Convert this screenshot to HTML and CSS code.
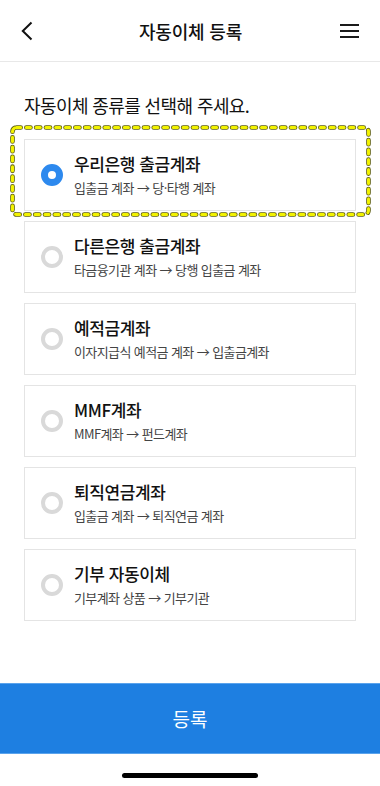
FILE: index.html
```html
<!DOCTYPE html>
<html lang="ko">
<head>
<meta charset="utf-8">
<title>자동이체 등록</title>
<link rel="stylesheet" href="styles.css">
</head>
<body>
<div class="app">
  <header class="topbar">
    <button class="icon-btn back" aria-label="뒤로">
      <svg width="12" height="20" viewBox="0 0 12 20"><polyline points="10.5,1.5 1.8,10 10.5,18.5" fill="none" stroke="#111" stroke-width="2" stroke-linejoin="miter"/></svg>
    </button>
    <h1 class="title">자동이체 등록</h1>
    <button class="icon-btn menu" aria-label="메뉴">
      <span class="bar"></span><span class="bar"></span><span class="bar"></span>
    </button>
  </header>

  <main class="content">
    <h2 class="lead">자동이체 종류를 선택해 주세요.</h2>
    <ul class="options">
      <li class="card selected">
        <svg class="highlight" width="361" height="92" viewBox="0 0 361 92" aria-hidden="true">
          <rect x="2.5" y="2.5" width="356" height="87" rx="4" fill="none" stroke="#5e5e12" stroke-width="4.6" stroke-dasharray="4.2 5.6" stroke-linecap="round"/>
          <rect x="2.5" y="2.5" width="356" height="87" rx="4" fill="none" stroke="#f2f200" stroke-width="3" stroke-dasharray="4.2 5.6" stroke-linecap="round"/>
        </svg>
        <span class="radio on"></span>
        <div class="texts">
          <div class="name">우리은행 출금계좌</div>
          <div class="desc">입출금 계좌 → 당·타행 계좌</div>
        </div>
      </li>
      <li class="card">
        <span class="radio"></span>
        <div class="texts">
          <div class="name">다른은행 출금계좌</div>
          <div class="desc">타금융기관 계좌 → 당행 입출금 계좌</div>
        </div>
      </li>
      <li class="card">
        <span class="radio"></span>
        <div class="texts">
          <div class="name">예적금계좌</div>
          <div class="desc">이자지급식 예적금 계좌 → 입출금계좌</div>
        </div>
      </li>
      <li class="card">
        <span class="radio"></span>
        <div class="texts">
          <div class="name">MMF계좌</div>
          <div class="desc">MMF계좌 → 펀드계좌</div>
        </div>
      </li>
      <li class="card">
        <span class="radio"></span>
        <div class="texts">
          <div class="name">퇴직연금계좌</div>
          <div class="desc">입출금 계좌 → 퇴직연금 계좌</div>
        </div>
      </li>
      <li class="card">
        <span class="radio"></span>
        <div class="texts">
          <div class="name">기부 자동이체</div>
          <div class="desc">기부계좌 상품 → 기부기관</div>
        </div>
      </li>
    </ul>
  </main>

  <footer class="footer">
    <button class="submit">등록</button>
    <div class="home-area"><span class="home-indicator"></span></div>
  </footer>
</div>
</body>
</html>
```

FILE: styles.css
```css
* { box-sizing: border-box; }
html, body { margin: 0; padding: 0; background: #fff; }
body {
  font-family: "Noto Sans CJK KR", "Noto Sans", sans-serif;
  color: #111;
}
.app {
  width: 380px;
  height: 786px;
  display: flex;
  flex-direction: column;
  overflow: hidden;
}
.topbar {
  height: 62px;
  flex: none;
  display: flex;
  align-items: center;
  justify-content: space-between;
  padding: 0 21px 0 21px;
  border-bottom: 1px solid #e8e8e8;
}
.icon-btn {
  border: 0;
  background: none;
  padding: 0;
  width: 20px;
  height: 24px;
  display: flex;
  align-items: center;
  cursor: pointer;
}
.back { justify-content: flex-start; margin-top: 1px; }
.menu {
  flex-direction: column;
  justify-content: center;
  gap: 4px;
  width: 19px;
  margin-right: 0;
}
.menu .bar {
  display: block;
  width: 19px;
  height: 2px;
  background: #1a1a1a;
}
.title {
  margin: 0;
  font-size: 18px;
  font-weight: 500;
  letter-spacing: -0.2px;
  color: #111;
}
.content {
  flex: 1;
  padding: 0 24px;
}
.lead {
  margin: 30px 0 0 0;
  font-size: 18px;
  line-height: 26px;
  font-weight: 400;
  letter-spacing: -0.6px;
  color: #111;
}
.options {
  list-style: none;
  margin: 21px 0 0 0;
  padding: 0;
  display: flex;
  flex-direction: column;
  gap: 10px;
}
.card {
  position: relative;
  height: 72px;
  border: 1px solid #e4e4e4;
  display: flex;
  align-items: center;
  padding: 0 0 0 16px;
  gap: 11px;
}
.highlight {
  position: absolute;
  left: -15.5px;
  top: -15px;
  pointer-events: none;
}
.radio {
  flex: none;
  width: 22px;
  height: 22px;
  border-radius: 50%;
  border: 4px solid #d9d9d9;
  background: #fff;
}
.radio.on {
  border: 7px solid #2d89ee;
  background: #fff;
}
.texts {
  display: flex;
  flex-direction: column;
  gap: 4px;
  margin-top: -1px;
}
.name {
  font-size: 17px;
  line-height: 22px;
  font-weight: 500;
  letter-spacing: -0.4px;
  color: #111;
}
.desc {
  font-size: 13px;
  line-height: 18px;
  font-weight: 400;
  letter-spacing: -0.6px;
  color: #444;
}
.footer {
  flex: none;
  display: flex;
  flex-direction: column;
}
.submit {
  height: 71px;
  border: 0;
  border-top: 1px solid #5aa3ec;
  border-bottom: 1px solid #5aa3ec;
  background: #1e7fe1;
  color: #fff;
  font-family: "Noto Sans CJK KR", "Noto Sans", sans-serif;
  font-size: 19px;
  font-weight: 400;
  padding: 0;
  cursor: pointer;
}
.home-area {
  height: 32px;
  display: flex;
  justify-content: center;
  padding-top: 19px;
}
.home-indicator {
  width: 136px;
  height: 5px;
  border-radius: 3px;
  background: #000;
}
```
